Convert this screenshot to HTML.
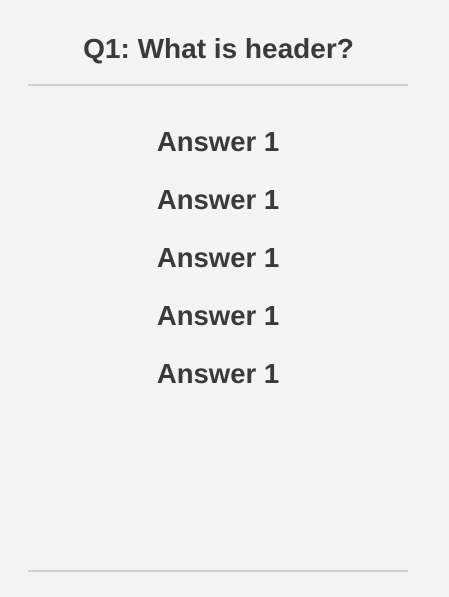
<!DOCTYPE html>
<html><head><style>
html,body{margin:0;padding:0;width:449px;height:597px;background:#f4f4f4;overflow:hidden}
body{font-family:"Liberation Sans",sans-serif;color:#3a3a3a;position:relative}
h1{position:absolute;top:33px;left:0;width:437px;text-align:center;margin:0;font-size:28px;font-weight:bold;letter-spacing:0}
.hr{position:absolute;left:28px;width:380px;height:1.5px;background:#cfcfcf}
.a{position:absolute;left:0;width:436px;text-align:center;font-size:27.5px;font-weight:bold;letter-spacing:0}
</style></head><body>
<h1>Q1: What is header?</h1>
<div class="hr" style="top:84px"></div>
<div class="a" style="top:126px">Answer 1</div>
<div class="a" style="top:184px">Answer 1</div>
<div class="a" style="top:242px">Answer 1</div>
<div class="a" style="top:300px">Answer 1</div>
<div class="a" style="top:358px">Answer 1</div>
<div class="hr" style="top:570px"></div>
</body></html>
